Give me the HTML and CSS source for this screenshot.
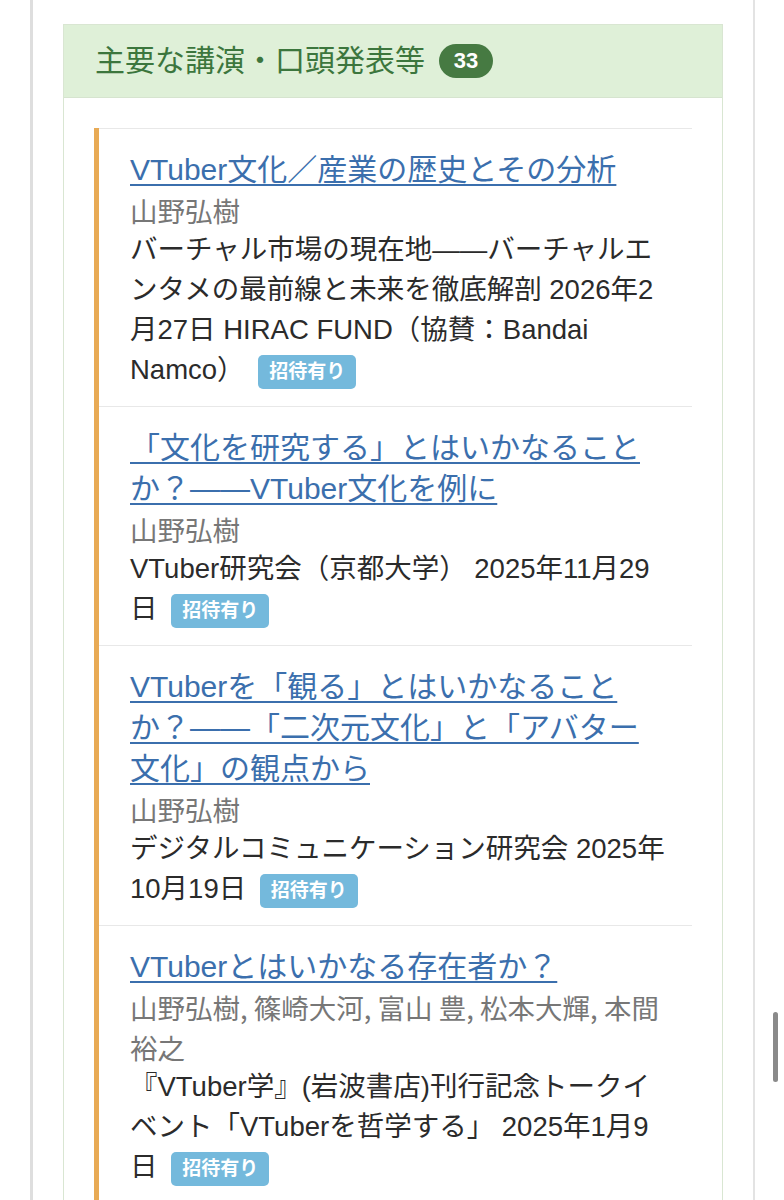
FILE: index.html
```html
<!DOCTYPE html>
<html lang="ja">
<head>
    <meta charset="UTF-8">
    <meta name="viewport" content="width=device-width, initial-scale=1.0">
    <title>主要な講演・口頭発表等</title>
    <link rel="stylesheet" href="styles.css">
</head>
<body>
    <div class="pageCard">
        <div class="panel">
            <div class="panelHeading">
                <span class="panelTitle">主要な講演・口頭発表等</span>
                <span class="countBadge">33</span>
            </div>
            <div class="panelBody">
                <ul class="talkList">
                    <li class="talkItem">
                        <div class="talkTitle"><a href="#">VTuber文化／産業の歴史とその分析</a></div>
                        <div class="talkAuthors">山野弘樹</div>
                        <div class="talkInfo">バーチャル市場の現在地——バーチャルエンタメの最前線と未来を徹底解剖 2026年2月27日 HIRAC FUND（協賛：Bandai Namco） <span class="inviteLabel">招待有り</span></div>
                    </li>
                    <li class="talkItem">
                        <div class="talkTitle"><a href="#">「文化を研究する」とはいかなることか？——VTuber文化を例に</a></div>
                        <div class="talkAuthors">山野弘樹</div>
                        <div class="talkInfo">VTuber研究会（京都大学） 2025年11月29日 <span class="inviteLabel">招待有り</span></div>
                    </li>
                    <li class="talkItem">
                        <div class="talkTitle"><a href="#">VTuberを「観る」とはいかなることか？——「二次元文化」と「アバター文化」の観点から</a></div>
                        <div class="talkAuthors">山野弘樹</div>
                        <div class="talkInfo">デジタルコミュニケーション研究会 2025年10月19日 <span class="inviteLabel">招待有り</span></div>
                    </li>
                    <li class="talkItem">
                        <div class="talkTitle"><a href="#">VTuberとはいかなる存在者か？</a></div>
                        <div class="talkAuthors">山野弘樹, 篠崎大河, 富山 豊, 松本大輝, 本間裕之</div>
                        <div class="talkInfo">『VTuber学』(岩波書店)刊行記念トークイベント「VTuberを哲学する」 2025年1月9日 <span class="inviteLabel">招待有り</span></div>
                    </li>
                </ul>
            </div>
        </div>
    </div>

    <!-- スクロールバー表示 -->
    <div class="scrollIndicator"></div>
</body>
</html>
```

FILE: styles.css
```css
body {
    margin: 0;
    background: #fff;
    font-family: "Liberation Sans", "Noto Sans CJK JP", sans-serif;
    color: #333;
}

.pageCard {
    margin-left: 30px;
    width: 660px;
    min-height: 1200px;
    padding: 24px 30px 0 30px;
    border-left: 3px solid #dedede;
    border-right: 2px solid #e3e3e3;
}

.panel {
    border: 1px solid #d9e6d2;
    background: #fff;
}
.panelHeading {
    display: flex;
    align-items: center;
    padding: 18px 31px;
    background: #dff0d8;
    border-bottom: 1px solid #d6e4cf;
    color: #3c763d;
    font-size: 30px;
    line-height: 36px;
}
.countBadge {
    display: inline-block;
    margin-left: 14px;
    min-width: 54px;
    height: 34px;
    line-height: 34px;
    border-radius: 17px;
    background: #467a42;
    color: #fff;
    font-size: 22px;
    font-weight: bold;
    text-align: center;
}

.panelBody {
    padding: 30px;
}
.talkList {
    list-style: none;
    margin: 0;
    padding: 0;
    border-left: 5px solid #e8aa55;
}
.talkItem {
    padding: 20px 23.5px 16px 31px;
    border-top: 1px solid #e8e8e8;
    font-size: 27.5px;
    line-height: 40px;
}

.talkTitle {
    font-size: 30px;
    line-height: 41px;
}
.talkTitle a {
    color: #3b6fad;
    text-decoration: underline;
    text-decoration-thickness: 2px;
    text-underline-offset: 4px;
}
.talkAuthors {
    font-family: "Noto Sans CJK JP", sans-serif;
    color: #777;
}
.talkInfo {
    color: #2b2b2b;
}

.inviteLabel {
    display: inline-block;
    margin-left: 6px;
    padding: 0 11px;
    height: 34px;
    line-height: 34px;
    border-radius: 5px;
    background: #74b9dc;
    color: #fff;
    font-size: 19px;
    font-weight: bold;
    vertical-align: middle;
}

.scrollIndicator {
    position: fixed;
    top: 1012px;
    right: 6px;
    width: 5px;
    height: 70px;
    border-radius: 3px;
    background: #8a8a8a;
}
```
